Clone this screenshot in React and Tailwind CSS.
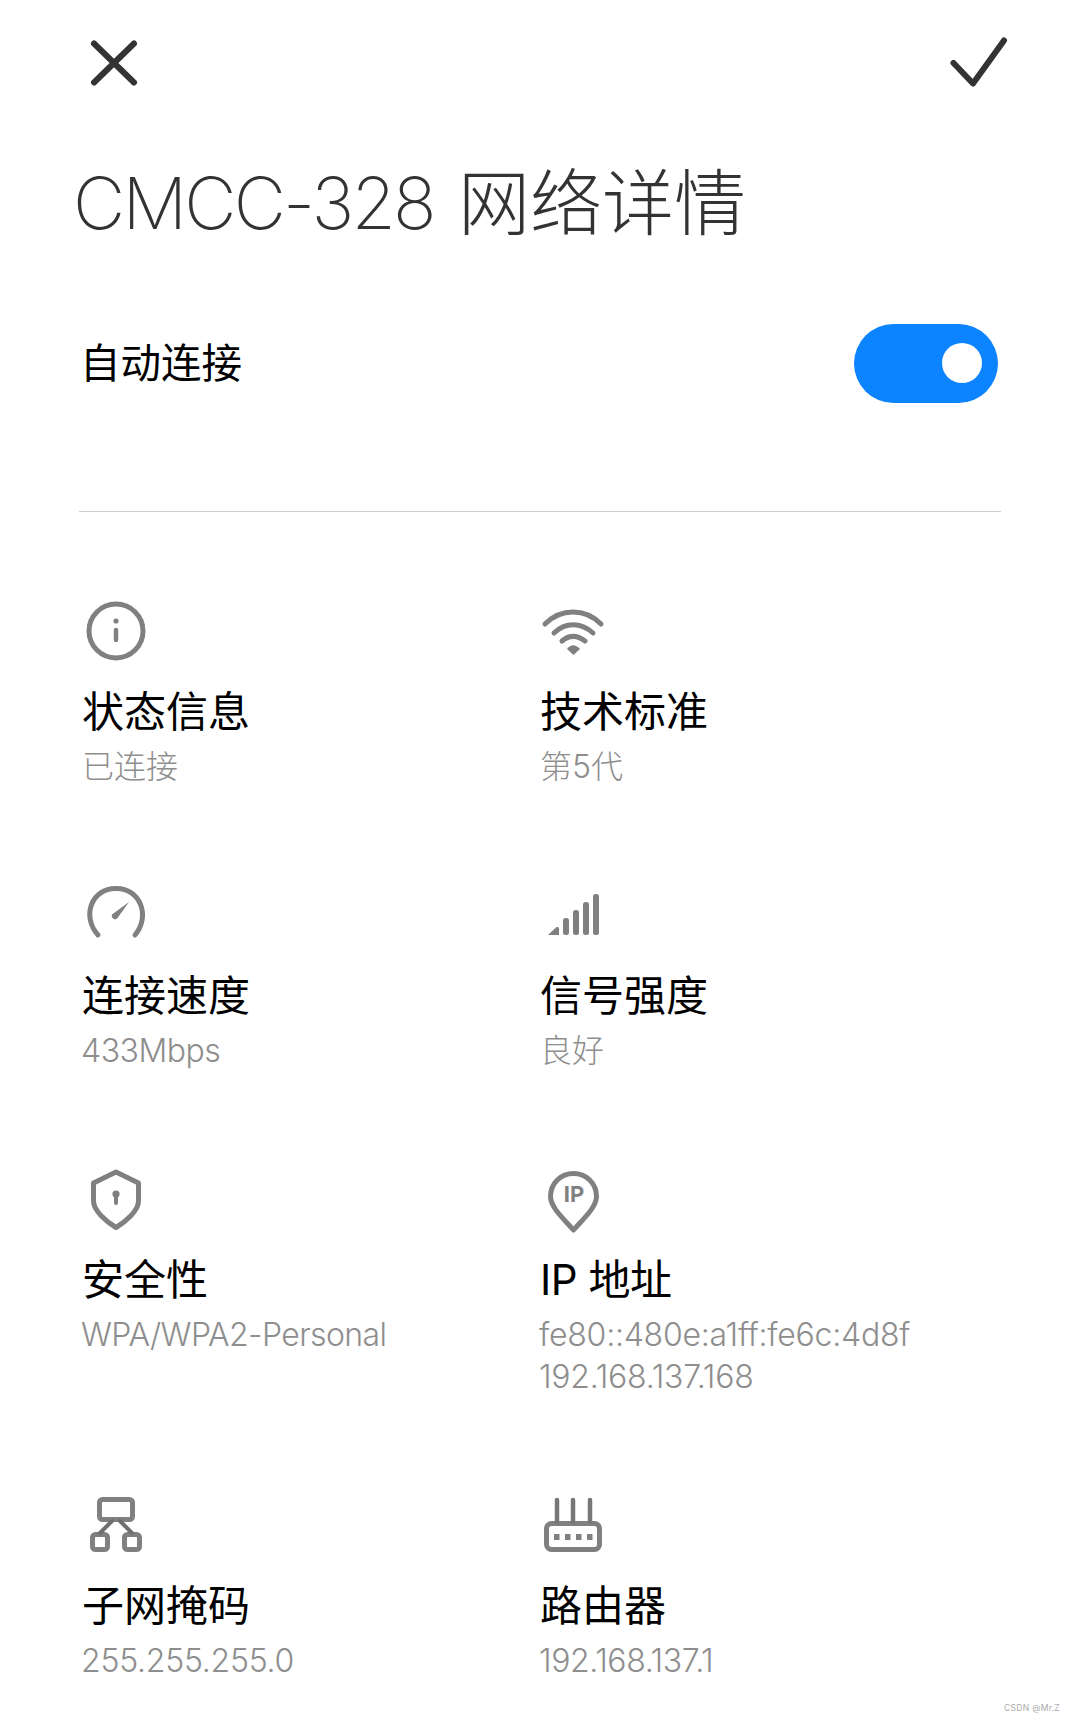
const FONT = "font-['Inter','Noto_Sans_CJK_SC',sans-serif]";

function Icon({ x, y, children }) {
  return (
    <svg
      width="70"
      height="70"
      viewBox={`${x} ${y} 70 70`}
      fill="none"
      stroke="#808080"
      strokeWidth="5"
      strokeLinecap="round"
      strokeLinejoin="round"
      className="block overflow-visible"
    >
      {children}
    </svg>
  );
}

function Item({ x, y, icon, title, lines, sub = "", head = "" }) {
  return (
    <div>
      <Icon x={x} y={y}>{icon}</Icon>
      <div className={`mt-[18px] text-[42px] leading-[56px] text-black ${head}`}>{title}</div>
      <div className={`mt-[6px] text-[32px] leading-[42px] font-light text-[#8e8e8e] ${sub}`}>
        {lines.map((l) => (
          <div key={l} className="whitespace-nowrap">{l}</div>
        ))}
      </div>
    </div>
  );
}

const Info = (
  <>
    <circle cx="116" cy="630" r="27" />
    <circle cx="116" cy="620" r="2.6" fill="#808080" stroke="none" />
    <path d="M116 629V639" strokeWidth="4.5" />
  </>
);
const Wifi = (
  <>
    <path d="M545 623C561 607 585 607 601 623" strokeWidth="5" />
    <path d="M554 632C565 621 581 621 593 632" strokeWidth="5" />
    <path d="M562 640C569 634 577 634 585 640" strokeWidth="5" />
    <path d="M567 648C571 643 575 643 580 648L573.5 654Z" fill="#808080" stroke="none" />
  </>
);
const Gauge = (
  <>
    <path d="M98 934C81 915 92 887 116 887.500C140 887 151 915 135 934" />
    <path d="M129 901L117.500 917C115 920 110.500 917 112 913.500Z" fill="#808080" stroke="none" />
  </>
);
const Signal = (
  <g fill="#808080" stroke="none">
    <path d="M548 934L556 926.500C557.500 925.500 559 926 559 928V934Z" />
    <rect x="563" y="917" width="6" height="17" rx="2.500" />
    <rect x="573" y="909" width="6" height="25" rx="2.500" />
    <rect x="583" y="901" width="6" height="33" rx="2.500" />
    <rect x="593" y="893" width="6" height="41" rx="2.500" />
  </g>
);
const Shield = (
  <>
    <path d="M116 1171L138.500 1182V1200C138.500 1210 125 1221 116 1226.500C107 1221 93.500 1210 93.500 1200V1182Z" />
    <circle cx="116" cy="1193" r="3.600" fill="#808080" stroke="none" />
    <path d="M116 1194V1202" strokeWidth="4" />
  </>
);
const Pin = (
  <>
    <path d="M573.500 1229C566 1220 550.500 1207 550.500 1195.500C550.500 1182 561 1172.500 573.500 1172.500C586 1172.500 596.500 1182 596.500 1195.500C596.500 1207 581 1220 573.500 1229Z" />
    <text
      x="574"
      y="1201"
      textAnchor="middle"
      fill="#808080"
      stroke="none"
      fontSize="22"
      fontWeight="700"
      fontFamily="Inter, sans-serif"
    >
      IP
    </text>
  </>
);
const Subnet = (
  <>
    <rect x="99.500" y="1498.500" width="33" height="20" rx="3" />
    <rect x="92.500" y="1533.500" width="15" height="15" rx="3" />
    <rect x="124.500" y="1533.500" width="15" height="15" rx="3" />
    <path d="M112 1520L100 1532M120 1520L132 1532" strokeWidth="4" stroke="#6f6f6f" />
  </>
);
const Router = (
  <>
    <rect x="546.500" y="1522.500" width="53" height="26" rx="5" />
    <path d="M557 1499V1521M573 1499V1521M590 1499V1521" strokeWidth="4.500" stroke="#777777" />
    <g fill="#808080" stroke="none">
      <rect x="554" y="1533" width="5.500" height="6" />
      <rect x="565" y="1533" width="5.500" height="6" />
      <rect x="576" y="1533" width="5.500" height="6" />
      <rect x="587" y="1533" width="5.500" height="6" />
    </g>
  </>
);

export default function App() {
  return (
    <div className={`relative w-[1075px] h-[1718px] overflow-hidden bg-white ${FONT}`}>
      <div className="flex justify-between items-start pt-[36px] pl-[89px] pr-[66px]">
        <svg width="50" height="52" viewBox="89 36 50 52" fill="none" stroke="#333333" strokeWidth="6" strokeLinecap="round" className="block">
          <path d="M94 43.500L134 82.500M134 43.500L94 82.500" />
        </svg>
        <svg width="60" height="52" viewBox="949 36 60 52" fill="none" stroke="#333333" strokeWidth="6" strokeLinecap="round" strokeLinejoin="round" className="block">
          <path d="M953.500 63L973 83.500L1004 40.500" />
        </svg>
      </div>

      <h1 className="mt-[75px] ml-[73px] text-[72px] leading-[80px] font-extralight text-[#333333] whitespace-nowrap">
        <span className="mr-[4px] tracking-[-2.8px]">CMCC-328</span> 网络详情
      </h1>

      <div className="mt-[81px] ml-[80px] mr-[77px] flex items-center justify-between">
        <span className="text-[40.5px] leading-[56px] text-black">自动连接</span>
        <div className="relative w-[144px] h-[79px] rounded-full bg-[#0d84ff]">
          <div className="absolute right-[16px] top-[19px] w-[40px] h-[40px] rounded-full bg-white" />
        </div>
      </div>

      <div className="mt-[108px] ml-[79px] mr-[74px] h-px bg-[#cccccc]" />

      <div className="mt-[84px] ml-[82px] grid grid-cols-[458px_1fr] gap-y-[92px]">
        <Item x={82} y={595} icon={Info} title="状态信息" lines={["已连接"]} />
        <Item x={540} y={595} icon={Wifi} title="技术标准" lines={["第5代"]} />
        <Item x={82} y={879} icon={Gauge} title="连接速度" lines={["433Mbps"]} sub="-ml-[1px] tracking-[-0.5px]" />
        <Item x={540} y={879} icon={Signal} title="信号强度" lines={["良好"]} />
        <Item x={82} y={1163} icon={Shield} title="安全性" lines={["WPA/WPA2-Personal"]} sub="-ml-[1px] tracking-[-0.6px]" />
        <Item x={540} y={1163} icon={Pin} title="IP 地址" head="tracking-[-0.5px]" lines={["fe80::480e:a1ff:fe6c:4d8f", "192.168.137.168"]} sub="-ml-[1px] tracking-[-0.25px]" />
        <Item x={82} y={1489} icon={Subnet} title="子网掩码" lines={["255.255.255.0"]} sub="-ml-[1px] tracking-[-0.25px]" />
        <Item x={540} y={1489} icon={Router} title="路由器" lines={["192.168.137.1"]} sub="-ml-[1px] tracking-[-0.4px]" />
      </div>

      <div className="absolute right-[15px] bottom-[4px] text-[8.5px] leading-[12px] tracking-[0.3px] text-[#aaaaaa]">CSDN @Mr.Z</div>
    </div>
  );
}
